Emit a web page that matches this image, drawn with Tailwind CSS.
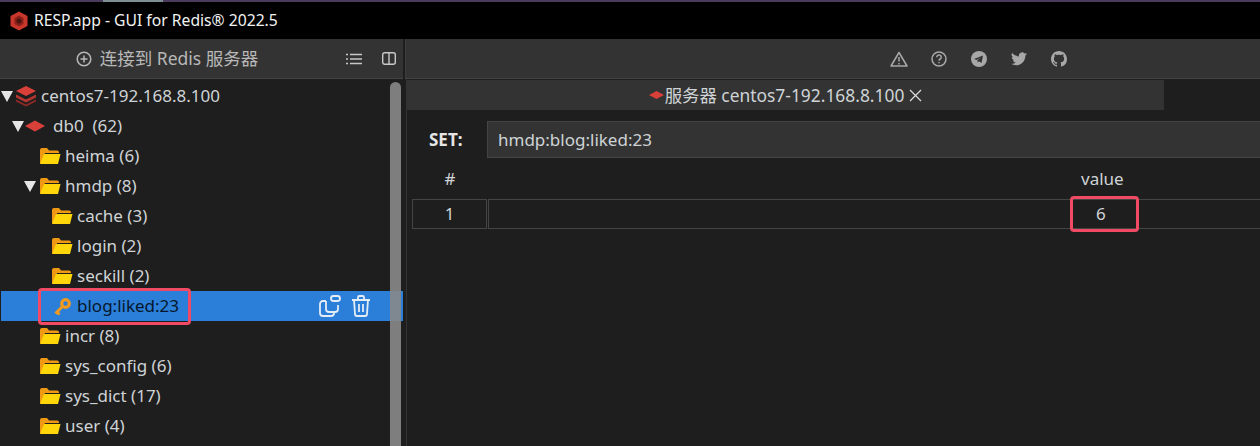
<!DOCTYPE html>
<html>
<head>
    <title>RESP.app - GUI for Redis 2022.5</title>
    <script src="https://cdn.jsdelivr.net/npm/@tailwindcss/browser@4"></script>
</head>
<body class="m-0 bg-[#1e1e1e] overflow-hidden">
<div class="relative w-[1260px] h-[446px] overflow-hidden font-['Noto_Sans','Noto_Sans_CJK_SC',sans-serif] text-[17px] text-[#cfd3d6]">

    <!-- window strip + title -->
    <div class="h-[2px] flex bg-[#4a3a5c]"><div class="ml-[103px] w-[60px] bg-[#7f8f94]"></div></div>
    <div class="h-[37px] bg-black flex items-center pl-[10px] text-[15.7px] text-[#f2f2f2]">
        <svg width="18" height="20" viewBox="0 0 18 20" class="mr-[6px]">
            <path d="M9 0.500 17.500 5v10L9 19.500 0.500 15V5z" fill="#c9372c"/>
            <path d="M9 4.500 13.500 7v6L9 15.500 4.500 13V7z" fill="#8a2019"/>
            <circle cx="9" cy="10" r="2.500" fill="#4a1310"/>
        </svg>
        <span>RESP.app - GUI for Redis® 2022.5</span>
    </div>

    <div class="flex h-[407px]">
        <!-- left panel -->
        <div class="w-[403px] shrink-0 flex flex-col">
            <div class="h-[40px] bg-[#333333] border-b border-[#444444] flex items-center shrink-0">
                <div class="w-[334px] flex items-center justify-center text-[17.5px] text-[#b8b8b8]">
                    <svg width="16" height="16" viewBox="0 0 16 16" fill="none" stroke="#b8b8b8" stroke-width="1.500" class="mr-[8px]">
                        <circle cx="8" cy="8" r="6.800"/><path d="M8 4.500v7M4.500 8h7"/>
                    </svg>
                    <span>连接到 Redis 服务器</span>
                </div>
                <svg width="16" height="12" viewBox="0 0 16 12" fill="none" stroke="#c8c8c8" stroke-width="1.400" class="ml-[12px]">
                    <path d="M4 1.500h12M4 6h12M4 10.500h12M0 1.500h2M0 6h2M0 10.500h2"/>
                </svg>
                <svg width="14" height="13" viewBox="0 0 14 13" fill="none" stroke="#c8c8c8" stroke-width="1.400" class="ml-[20px]">
                    <rect x="0.700" y="0.700" width="12.600" height="11.600" rx="2"/><path d="M7 0.700v11.600"/>
                </svg>
            </div>

            <div class="relative flex-1 bg-[#1e1e1e] pt-[2px]">
                <!-- tree -->
                <div class="h-[30px] flex items-center pl-[1px]">
                    <svg width="12" height="12" viewBox="0 0 12 12"><path d="M0 1h12L6 12z" fill="#e6e6e6"/></svg>
                    <svg width="22" height="22" viewBox="0 0 22 22" class="ml-[2px]">
                        <path d="M11 1 21 6l-10 5L1 6z" fill="#d9403a"/>
                        <path d="M1 9.500l10 5 10-5v3l-10 5-10-5z" fill="#b23530"/>
                        <path d="M1 14.500l10 5 10-5v2l-10 5-10-5z" fill="#8f2a26"/>
                    </svg>
                    <span class="ml-[4px]">centos7-192.168.8.100</span>
                </div>
                <div class="h-[30px] flex items-center pl-[12px]">
                    <svg width="12" height="12" viewBox="0 0 12 12"><path d="M0 1h12L6 12z" fill="#e6e6e6"/></svg>
                    <svg width="22" height="12" viewBox="0 0 22 12"><path d="M11 0.500 21 6 11 11.500 1 6z" fill="#d9403a"/></svg>
                    <span class="ml-[7px]">db0&nbsp; (62)</span>
                </div>

                <div class="h-[30px] flex items-center pl-[39px]">
                    <svg width="22" height="18" viewBox="0 0 22 18"><path d="M1 16V3q0-2 2-2h5l2 2.500h8q2 0 2 2V6H6L2.500 16z" fill="#f09a14"/><path d="M5 7h16.500L19 17H1z" fill="#ffd60a"/></svg>
                    <span class="ml-[4px]">heima (6)</span>
                </div>
                <div class="h-[30px] flex items-center pl-[24px]">
                    <svg width="12" height="12" viewBox="0 0 12 12"><path d="M0 1h12L6 12z" fill="#e6e6e6"/></svg>
                    <svg width="22" height="18" viewBox="0 0 22 18" class="ml-[3px]"><path d="M1 16V3q0-2 2-2h5l2 2.500h8q2 0 2 2V6H6L2.500 16z" fill="#f09a14"/><path d="M5 7h16.500L19 17H1z" fill="#ffd60a"/></svg>
                    <span class="ml-[4px]">hmdp (8)</span>
                </div>
                <div class="h-[30px] flex items-center pl-[51px]">
                    <svg width="22" height="18" viewBox="0 0 22 18"><path d="M1 16V3q0-2 2-2h5l2 2.500h8q2 0 2 2V6H6L2.500 16z" fill="#f09a14"/><path d="M5 7h16.500L19 17H1z" fill="#ffd60a"/></svg>
                    <span class="ml-[4px]">cache (3)</span>
                </div>
                <div class="h-[30px] flex items-center pl-[51px]">
                    <svg width="22" height="18" viewBox="0 0 22 18"><path d="M1 16V3q0-2 2-2h5l2 2.500h8q2 0 2 2V6H6L2.500 16z" fill="#f09a14"/><path d="M5 7h16.500L19 17H1z" fill="#ffd60a"/></svg>
                    <span class="ml-[4px]">login (2)</span>
                </div>
                <div class="h-[30px] flex items-center pl-[51px]">
                    <svg width="22" height="18" viewBox="0 0 22 18"><path d="M1 16V3q0-2 2-2h5l2 2.500h8q2 0 2 2V6H6L2.500 16z" fill="#f09a14"/><path d="M5 7h16.500L19 17H1z" fill="#ffd60a"/></svg>
                    <span class="ml-[4px]">seckill (2)</span>
                </div>
                <div class="h-[30px] flex items-center pl-[53px] bg-[#2b7fd9] ml-[1px]">
                    <svg width="19" height="19" viewBox="0 0 19 19" class="-ml-[1px]" fill="none">
                        <circle cx="12.500" cy="6.500" r="3.800" stroke="#f29a1f" stroke-width="3.200"/>
                        <path d="M9.500 9.500 2.500 16.500M4 15l2.500 2.500" stroke="#f29a1f" stroke-width="3"/>
                    </svg>
                    <span class="ml-[5px] text-[#06172b]">blog:liked:23</span>
                    <svg width="24" height="24" viewBox="0 0 24 24" fill="none" stroke="#e4edf6" stroke-width="1.800" class="ml-[139px]">
                        <path d="M8 7H5a3 3 0 0 0-3 3v9a3 3 0 0 0 3 3h8a3 3 0 0 0 3-3v-1"/>
                        <path d="M8 7v8a3 3 0 0 0 3 3h6a3 3 0 0 0 3-3V11"/>
                        <rect x="13" y="2" width="9" height="5" rx="2.500"/>
                    </svg>
                    <svg width="20" height="22" viewBox="0 0 20 22" fill="none" stroke="#e4edf6" stroke-width="1.800" class="ml-[9px]">
                        <path d="M1 5h18M7 5V2.500A1.500 1.500 0 0 1 8.500 1h3A1.500 1.500 0 0 1 13 2.500V5M3 5l1 14a2 2 0 0 0 2 2h8a2 2 0 0 0 2-2l1-14M8 9v8M12 9v8"/>
                    </svg>
                </div>
                <div class="h-[30px] flex items-center pl-[39px]">
                    <svg width="22" height="18" viewBox="0 0 22 18"><path d="M1 16V3q0-2 2-2h5l2 2.500h8q2 0 2 2V6H6L2.500 16z" fill="#f09a14"/><path d="M5 7h16.500L19 17H1z" fill="#ffd60a"/></svg>
                    <span class="ml-[4px]">incr (8)</span>
                </div>
                <div class="h-[30px] flex items-center pl-[39px]">
                    <svg width="22" height="18" viewBox="0 0 22 18"><path d="M1 16V3q0-2 2-2h5l2 2.500h8q2 0 2 2V6H6L2.500 16z" fill="#f09a14"/><path d="M5 7h16.500L19 17H1z" fill="#ffd60a"/></svg>
                    <span class="ml-[4px]">sys_config (6)</span>
                </div>
                <div class="h-[30px] flex items-center pl-[39px]">
                    <svg width="22" height="18" viewBox="0 0 22 18"><path d="M1 16V3q0-2 2-2h5l2 2.500h8q2 0 2 2V6H6L2.500 16z" fill="#f09a14"/><path d="M5 7h16.500L19 17H1z" fill="#ffd60a"/></svg>
                    <span class="ml-[4px]">sys_dict (17)</span>
                </div>
                <div class="h-[30px] flex items-center pl-[39px]">
                    <svg width="22" height="18" viewBox="0 0 22 18"><path d="M1 16V3q0-2 2-2h5l2 2.500h8q2 0 2 2V6H6L2.500 16z" fill="#f09a14"/><path d="M5 7h16.500L19 17H1z" fill="#ffd60a"/></svg>
                    <span class="ml-[4px]">user (4)</span>
                </div>

                <!-- scrollbar -->
                <div class="absolute left-[390px] top-[3px] bottom-0 w-[11px] rounded-t-[6px] bg-[#888888]/90"></div>
            </div>
        </div>

        <!-- right panel -->
        <div class="flex-1 flex flex-col min-w-0">
            <div class="h-[40px] bg-[#333333] border-b border-[#444444] border-l border-l-[#3d3d3d] ml-[2px] flex items-center pl-[484px] gap-[23px] shrink-0">
                <svg width="18" height="16" viewBox="0 0 18 16" fill="none" stroke="#a8a8a8" stroke-width="1.500">
                    <path d="M9 1.500 17 15H1z" stroke-linejoin="round"/><path d="M9 6v4.500M9 12v1.500"/>
                </svg>
                <svg width="16" height="16" viewBox="0 0 16 16" fill="none" stroke="#a8a8a8" stroke-width="1.500">
                    <circle cx="8" cy="8" r="7"/><path d="M5.800 6.200a2.200 2.200 0 1 1 3.400 1.800C8.400 8.500 8 9 8 9.800M8 11v1.300"/>
                </svg>
                <svg width="16" height="16" viewBox="0 0 16 16" class="ml-[1px]">
                    <circle cx="8" cy="8" r="8" fill="#a8a8a8"/><path d="M3 8l9-3.500-1.500 7.500-2.500-1.800-1.300 1.300-.3-2.300 3.600-3-4.500 2.700z" fill="#333333"/>
                </svg>
                <svg width="16" height="14" viewBox="0 0 24 20" class="ml-[1px]">
                    <path fill="#a8a8a8" d="M24 2.400a10 10 0 0 1-2.800.8 5 5 0 0 0 2.200-2.700 10 10 0 0 1-3.100 1.200 4.900 4.900 0 0 0-8.400 4.500A14 14 0 0 1 1.700.9a4.900 4.900 0 0 0 1.500 6.600 5 5 0 0 1-2.200-.6 4.900 4.900 0 0 0 3.900 4.900 5 5 0 0 1-2.200.1 4.900 4.900 0 0 0 4.600 3.400A9.900 9.900 0 0 1 0 17.300 14 14 0 0 0 7.500 19.500c9.100 0 14.300-7.700 14-14.600A10 10 0 0 0 24 2.400z"/>
                </svg>
                <svg width="16" height="16" viewBox="0 0 16 16" class="ml-[1px]">
                    <path fill="#a8a8a8" d="M8 0C3.580 0 0 3.580 0 8c0 3.540 2.290 6.530 5.470 7.590.4.070.55-.17.550-.38 0-.19-.01-.82-.01-1.490-2.010.37-2.530-.49-2.690-.94-.09-.23-.48-.94-.82-1.130-.28-.15-.68-.52-.01-.53.63-.01 1.080.58 1.230.82.720 1.210 1.870.87 2.330.66.070-.52.280-.87.510-1.070-1.780-.2-3.640-.89-3.640-3.950 0-.87.310-1.590.820-2.150-.08-.2-.36-1.020.08-2.120 0 0 .67-.21 2.200.82.640-.18 1.320-.27 2-.27s1.360.09 2 .27c1.530-1.040 2.200-.82 2.200-.82.440 1.100.16 1.920.08 2.120.51.560.82 1.270.82 2.150 0 3.070-1.870 3.750-3.650 3.950.29.250.54.730.54 1.480 0 1.070-.01 1.930-.01 2.200 0 .21.150.46.550.38A8.010 8.010 0 0 0 16 8c0-4.420-3.580-8-8-8z"/>
                </svg>
            </div>

            <div class="flex-1 ml-[3px] pt-[1px] bg-[#1e1e1e] border-l border-l-[#333333]">
                <!-- tab -->
                <div class="w-[757px] h-[30px] bg-[#333333] flex items-center justify-center text-[17.4px]">
                    <svg width="15" height="8" viewBox="0 0 15 8" class="mr-[1px]"><path d="M7.500 0 15 4 7.500 8 0 4z" fill="#d9403a"/></svg>
                    <span>服务器 centos7-192.168.8.100</span>
                    <svg width="13" height="13" viewBox="0 0 13 13" fill="none" stroke="#d8d8d8" stroke-width="1.300" class="ml-[5px]"><path d="M1 1l11 11M12 1 1 12"/></svg>
                </div>
                <!-- key row -->
                <div class="flex items-center mt-[11px] h-[37px]">
                    <div class="w-[80px] pl-[22px] font-bold text-[#e6e6e6]">SET:</div>
                    <div class="flex-1 h-[37px] bg-[#333333] border border-[#444444] border-r-0 flex items-center pl-[10px]">hmdp:blog:liked:23</div>
                </div>
                <!-- table -->
                <div class="flex h-[41px] items-center">
                    <div class="w-[86px] text-center">#</div>
                    <div class="flex-1 pl-[588px]">value</div>
                </div>
                <div class="flex h-[30px] ml-[5px]">
                    <div class="w-[75px] border border-[#444444] flex items-center justify-center">1</div>
                    <div class="flex-1 ml-[1px] border border-r-0 border-[#444444] flex items-center pl-[607px]">6</div>
                </div>
            </div>
        </div>
    </div>

    <!-- red highlight marks drawn over the shot -->
    <div class="absolute left-[38px] top-[288px] w-[153px] h-[37px] border-[3px] border-[#f04a64] rounded-[4px]"></div>
    <div class="absolute left-[1070px] top-[196px] w-[69px] h-[36px] border-[3px] border-[#f04a64] rounded-[4px]"></div>
</div>
</body>
</html>
